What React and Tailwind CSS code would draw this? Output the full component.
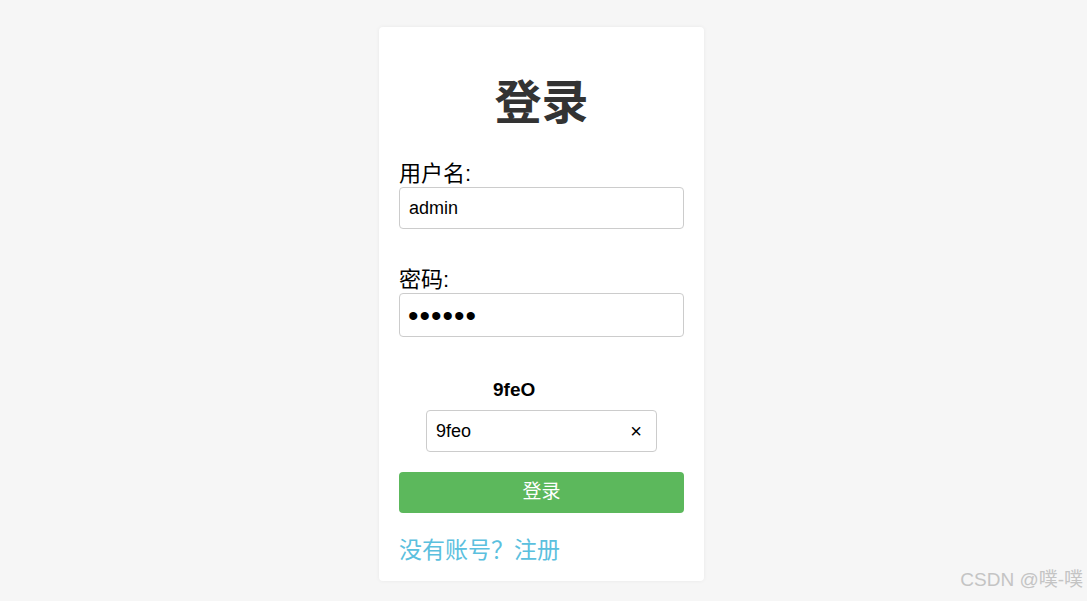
import React, { useState } from 'react';

const font = { fontFamily: '"Liberation Sans", "Noto Sans CJK SC", sans-serif' };

const App = () => {
    const [username, setUsername] = useState('admin');
    const [password, setPassword] = useState('123456');
    const [captcha, setCaptcha] = useState('9feo');

    return (
        <div className="relative min-h-[601px] w-full bg-[#f6f6f6]" style={font}>
            <div className="flex justify-center pt-[27px] pr-[4px]">
                <div className="w-[325px] rounded bg-white px-5 pt-[46px] pb-[16px] shadow-[0_0_4px_rgba(0,0,0,0.06)]">
                    <h1 className="mb-[28px] text-center text-[47px] font-bold leading-[60px] text-[#333]">登录</h1>

                    {/* username */}
                    <div className="mb-[38px]">
                        <label htmlFor="username" className="block text-[22px] leading-[26px] text-black">用户名:</label>
                        <input
                            id="username"
                            value={username}
                            onChange={e => setUsername(e.target.value)}
                            className="block h-[42px] w-full rounded border border-[#ccc] px-[9px] text-[18px] text-black outline-none"
                        />
                    </div>

                    {/* password */}
                    <div className="mb-[42px]">
                        <label htmlFor="password" className="block text-[22px] leading-[26px] text-black">密码:</label>
                        <input
                            id="password"
                            type="password"
                            value={password}
                            onChange={e => setPassword(e.target.value)}
                            className="block h-[44px] w-full rounded border border-[#ccc] px-[8px] text-[30px] tracking-[1px] text-black outline-none"
                        />
                    </div>

                    {/* captcha */}
                    <div className="mb-[20px] flex flex-col items-center">
                        <div className="mb-[9px] w-full pl-[94px] text-[19px] font-bold leading-[22px] text-black">9feO</div>
                        <div className="flex h-[42px] w-[231px] items-center rounded border border-[#ccc] pl-[9px] pr-[14px]">
                            <input
                                value={captcha}
                                onChange={e => setCaptcha(e.target.value)}
                                className="min-w-0 flex-1 text-[18px] text-black outline-none"
                            />
                            <button type="button" onClick={() => setCaptcha('')} className="text-[20px] leading-none text-black">×</button>
                        </div>
                    </div>

                    <button type="button" className="block h-[41px] w-full rounded bg-[#5cb85c] text-[19px] text-white">登录</button>

                    <div className="mt-[22px] text-[23px] leading-[30px] text-[#5bc0de]">
                        <span>没有账号？</span><a href="#" className="text-[#5bc0de]">注册</a>
                    </div>
                </div>
            </div>
            <div className="absolute right-[4px] bottom-[7px] text-[19px] text-[#c4c4c4]">CSDN @噗-噗</div>
        </div>
    );
};

export default App;
